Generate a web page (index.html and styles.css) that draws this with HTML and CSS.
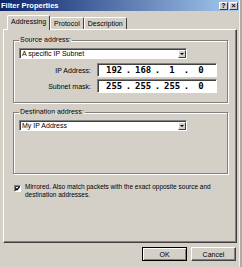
FILE: index.html
```html
<!DOCTYPE html>
<html lang="en">
<head>
    <meta charset="UTF-8">
    <title>Filter Properties</title>
    <link rel="stylesheet" href="styles.css">
</head>
<body>

    <div class="window">
        <div class="titlebar">
            <span class="title">Filter Properties</span>
            <div class="caption-btns">
                <span class="cap-btn">?</span>
                <span class="cap-btn">&#215;</span>
            </div>
        </div>

        <div class="content">
            <div class="tabs">
                <div class="tab active">Addressing</div>
                <div class="tab">Protocol</div>
                <div class="tab">Description</div>
            </div>

            <div class="panel">
                <fieldset class="group src-group">
                    <legend>Source address:</legend>
                    <div class="combo">
                        <span class="combo-text">A specific IP Subnet</span>
                        <span class="combo-btn"><span class="tri"></span></span>
                    </div>
                    <div class="row">
                        <label class="row-label">IP Address:</label>
                        <div class="ipbox">
                            <span class="oct">192</span><span class="dot">.</span>
                            <span class="oct">168</span><span class="dot">.</span>
                            <span class="oct">1</span><span class="dot">.</span>
                            <span class="oct">0</span>
                        </div>
                    </div>
                    <div class="row">
                        <label class="row-label">Subnet mask:</label>
                        <div class="ipbox">
                            <span class="oct">255</span><span class="dot">.</span>
                            <span class="oct">255</span><span class="dot">.</span>
                            <span class="oct">255</span><span class="dot">.</span>
                            <span class="oct">0</span>
                        </div>
                    </div>
                </fieldset>

                <fieldset class="group dst-group">
                    <legend>Destination address:</legend>
                    <div class="combo">
                        <span class="combo-text">My IP Address</span>
                        <span class="combo-btn"><span class="tri"></span></span>
                    </div>
                </fieldset>

                <div class="check-row">
                    <span class="checkbox">
                        <svg width="5" height="5" viewBox="0 0 5 5"><path d="M0.5 2.2 L2 3.7 L4.5 0.8" fill="none" stroke="#000" stroke-width="1.3"/></svg>
                    </span>
                    <span class="check-text">Mirrored. Also match packets with the exact opposite source and destination addresses.</span>
                </div>
            </div>

            <div class="buttons">
                <button class="btn default">OK</button>
                <button class="btn">Cancel</button>
            </div>
        </div>
    </div>

</body>
</html>
```

FILE: styles.css
```css
body {
    margin: 0;
    padding: 0;
    background: #b0aca4;
    font-family: 'Liberation Sans', Arial, sans-serif;
    font-size: 7px;
    color: #000;
}

.window {
    width: 239px;
    height: 267px;
    background: #d4d0c8;
    border-right: 1px solid #f0f0f0;
    overflow: hidden;
}

.titlebar {
    height: 11px;
    display: flex;
    align-items: center;
    justify-content: space-between;
    padding: 0 1px 0 1px;
    background: linear-gradient(to right, #0a246a, #a6caf0);
    box-sizing: border-box;
}

.title {
    color: #fff;
    font-weight: bold;
    font-size: 7.5px;
    line-height: 9px;
}

.caption-btns {
    display: flex;
    gap: 1px;
}

.cap-btn {
    width: 9px;
    height: 8px;
    box-sizing: border-box;
    background: #d4d0c8;
    border: 1px solid;
    border-color: #fff #404040 #404040 #fff;
    font-size: 7px;
    font-weight: bold;
    line-height: 6px;
    text-align: center;
}

.content {
    padding: 4px 2px 0 3px;
}

.tabs {
    display: flex;
    align-items: flex-end;
    height: 14px;
    padding-left: 4px;
    position: relative;
    z-index: 1;
}

.tab {
    height: 12px;
    padding: 0 3px;
    box-sizing: border-box;
    border: 1px solid;
    border-color: #fff #404040 transparent #fff;
    border-bottom: none;
    border-radius: 2px 2px 0 0;
    line-height: 11px;
    background: #d4d0c8;
}

.tab.active {
    height: 15px;
    margin-bottom: -1px;
    padding: 0 3px;
    line-height: 12px;
}

.panel {
    height: 214px;
    box-sizing: border-box;
    border: 1px solid;
    border-color: #fff #404040 #404040 #fff;
    box-shadow: inset -1px -1px 0 #808080;
    padding-top: 6px;
}

.group {
    margin: 0 8px 0 9px;
    padding: 4px 5px 9px 5px;
    border: 1px solid #808080;
    box-shadow: inset 1px 1px 0 #fff, 1px 1px 0 #fff;
    min-width: 0;
}

.group legend {
    padding: 0 1px;
    line-height: 8px;
}

.dst-group {
    margin-top: 5px;
    padding-bottom: 42px;
}

.combo {
    width: 168px;
    height: 11px;
    box-sizing: border-box;
    display: flex;
    background: #fff;
    border: 1px solid;
    border-color: #808080 #fff #fff #808080;
    box-shadow: inset 1px 1px 0 #404040;
}

.combo-text {
    flex: 1;
    padding-left: 2px;
    line-height: 9px;
}

.combo-btn {
    width: 8px;
    height: 8px;
    margin: 1px 0 0 0;
    box-sizing: border-box;
    background: #d4d0c8;
    border: 1px solid;
    border-color: #fff #404040 #404040 #fff;
    display: flex;
    align-items: center;
    justify-content: center;
}

.tri {
    width: 0;
    height: 0;
    border-left: 2px solid transparent;
    border-right: 2px solid transparent;
    border-top: 2px solid #000;
}

.row {
    display: flex;
    align-items: center;
    margin-top: 4px;
}

.row + .row {
    margin-top: 2px;
}

.row-label {
    width: 72px;
    text-align: right;
    margin-right: 6px;
}

.ipbox {
    width: 120px;
    height: 14px;
    box-sizing: border-box;
    background: #fff;
    border: 1px solid;
    border-color: #808080 #fff #fff #808080;
    box-shadow: inset 1px 1px 0 #404040;
    display: grid;
    grid-template-columns: 16px 13px 16px 13px 16px 13px 16px;
    align-items: center;
    padding-left: 8px;
    font-family: 'DejaVu Sans Mono', 'Liberation Mono', monospace;
    font-weight: bold;
    font-size: 9px;
    line-height: 12px;
}

.oct,
.dot {
    text-align: center;
}

.check-row {
    display: flex;
    align-items: flex-start;
    margin: 9px 0 0 10px;
    width: 200px;
}

.checkbox {
    flex: none;
    width: 7px;
    height: 7px;
    box-sizing: border-box;
    margin-top: 2px;
    background: #fff;
    border: 1px solid;
    border-color: #808080 #fff #fff #808080;
    box-shadow: inset 1px 1px 0 #404040;
    display: flex;
    align-items: center;
    justify-content: center;
}

.check-text {
    margin-left: 4px;
    font-size: 6.5px;
    line-height: 8px;
}

.buttons {
    display: flex;
    justify-content: flex-end;
    gap: 4px;
    padding: 4px 1px 0 0;
}

.btn {
    width: 45px;
    height: 14px;
    box-sizing: border-box;
    padding: 0;
    background: #d4d0c8;
    border: 1px solid;
    border-color: #fff #404040 #404040 #fff;
    box-shadow: inset -1px -1px 0 #808080;
    font-family: 'Liberation Sans', Arial, sans-serif;
    font-size: 7px;
    color: #000;
}

.btn.default {
    border-color: #000;
    box-shadow: inset 1px 1px 0 #fff, inset -1px -1px 0 #808080;
}
```
